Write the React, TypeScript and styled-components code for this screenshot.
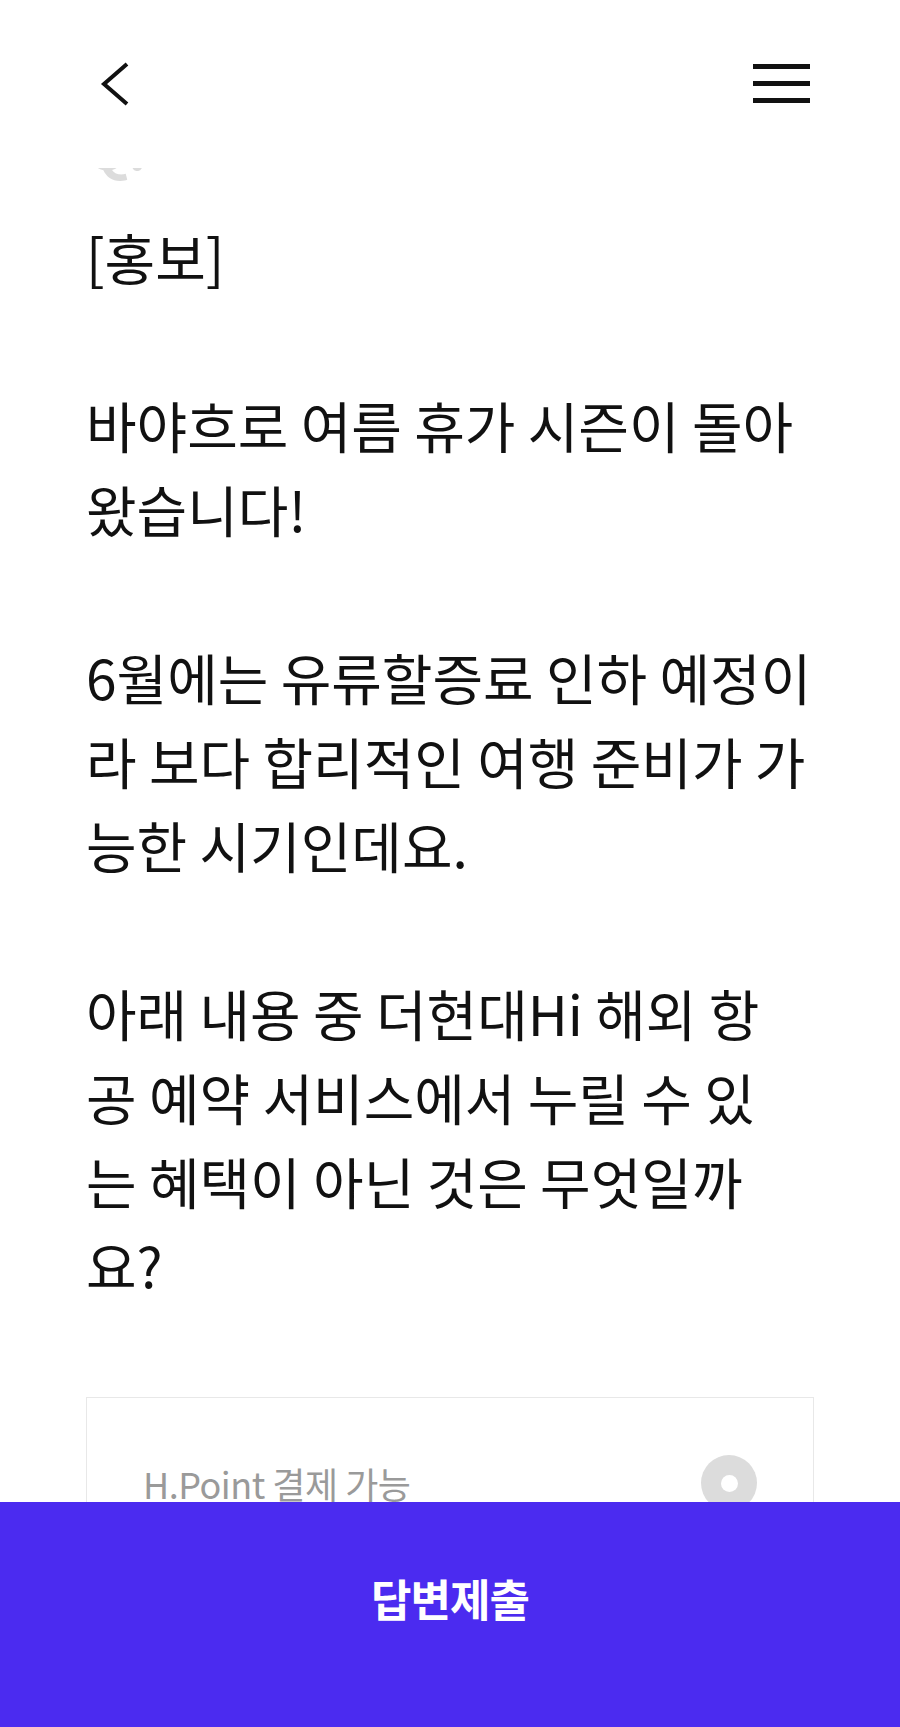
import React from "react";
import styled, { createGlobalStyle } from "styled-components";

const GlobalStyle = createGlobalStyle`
  html, body {
    margin: 0;
    padding: 0;
    background: #fff;
  }
  body {
    font-family: "Noto Sans CJK KR", "Noto Sans", sans-serif;
    color: #111;
  }
`;

const Header = styled.header`
  position: fixed;
  top: 0;
  left: 0;
  right: 0;
  height: 168px;
  background: #fff;
  z-index: 10;
  display: flex;
  align-items: flex-start;
  justify-content: space-between;
  padding: 60px 90px 0 100px;
  box-sizing: border-box;
`;

const IconButton = styled.button`
  border: 0;
  background: none;
  padding: 0;
  margin: 0;
  display: flex;
  cursor: pointer;
`;

const Main = styled.main`
  padding: 104px 86px 260px;
`;

const QMark = styled.div`
  font-size: 55px;
  line-height: 84px;
  font-weight: 700;
  color: #dcdcdc;
`;

const Body = styled.p`
  margin: 26px 0 0;
  font-size: 55px;
  line-height: 84px;
  font-weight: 400;
  color: #111;
  white-space: nowrap;
`;

const Option = styled.label`
  margin-top: 91px;
  display: flex;
  align-items: center;
  justify-content: space-between;
  border: 1px solid #e8e8e8;
  padding: 57px 56px;
  cursor: pointer;
`;

const OptionText = styled.span`
  font-size: 36px;
  line-height: 40px;
  color: #9a9a9a;
  font-weight: 400;
  letter-spacing: -0.5px;
`;

const Radio = styled.span<{ $checked?: boolean }>`
  width: 56px;
  height: 56px;
  border-radius: 50%;
  background: ${(p) => (p.$checked ? "#4b2bf0" : "#dcdcdc")};
  display: flex;
  align-items: center;
  justify-content: center;
  &::after {
    content: "";
    width: 17px;
    height: 17px;
    border-radius: 50%;
    background: #fff;
  }
`;

const SubmitButton = styled.button`
  position: fixed;
  left: 0;
  right: 0;
  bottom: 0;
  height: 225px;
  border: 0;
  margin: 0;
  padding: 0 0 33px;
  background: #4b2bf0;
  color: #fff;
  font-family: "Noto Sans CJK KR", "Noto Sans", sans-serif;
  font-size: 44px;
  font-weight: 700;
  letter-spacing: -1px;
  display: flex;
  align-items: center;
  justify-content: center;
  z-index: 10;
  cursor: pointer;
`;

const BackIcon = () => (
  <svg width="32" height="48" viewBox="0 0 32 48" fill="none">
    <path d="M27 4 L4 24 L27 44" stroke="#111" strokeWidth="4" />
  </svg>
);

const MenuIcon = () => (
  <svg width="57" height="44" viewBox="0 0 57 44" fill="#111">
    <rect x="0" y="4" width="57" height="5" />
    <rect x="0" y="21" width="57" height="5" />
    <rect x="0" y="38" width="57" height="5" />
  </svg>
);

const lines = [
  "[홍보]",
  "",
  "바야흐로 여름 휴가 시즌이 돌아",
  "왔습니다!",
  "",
  "6월에는 유류할증료 인하 예정이",
  "라 보다 합리적인 여행 준비가 가",
  "능한 시기인데요.",
  "",
  "아래 내용 중 더현대Hi 해외 항",
  "공 예약 서비스에서 누릴 수 있",
  "는 혜택이 아닌 것은 무엇일까",
  "요?",
];

export default function App() {
  return (
    <>
      <GlobalStyle />
      <Header>
        <IconButton aria-label="뒤로">
          <BackIcon />
        </IconButton>
        <IconButton aria-label="메뉴">
          <MenuIcon />
        </IconButton>
      </Header>
      <Main>
        <QMark>Q.</QMark>
        <Body>
          {lines.map((line, i) => (
            <React.Fragment key={i}>
              {line}
              {i < lines.length - 1 && <br />}
            </React.Fragment>
          ))}
        </Body>
        <Option>
          <OptionText>H.Point 결제 가능</OptionText>
          <Radio />
        </Option>
      </Main>
      <SubmitButton>답변제출</SubmitButton>
    </>
  );
}
